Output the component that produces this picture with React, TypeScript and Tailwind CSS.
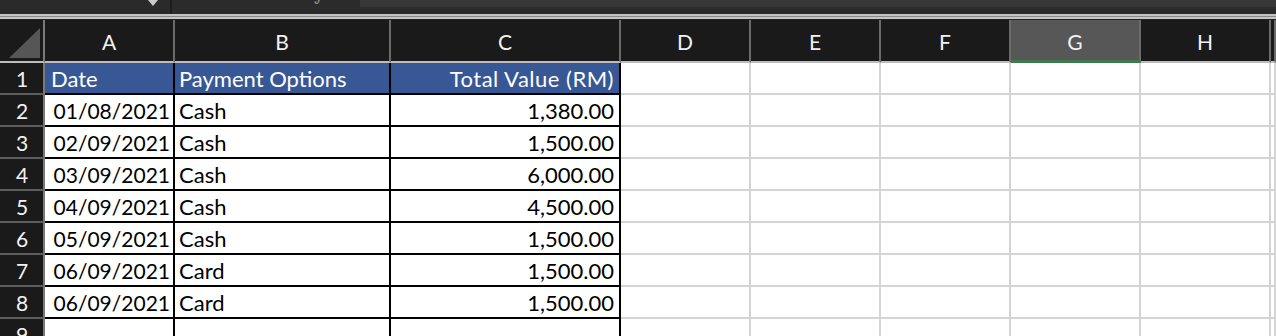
import React from "react";

const COLS = ["A", "B", "C", "D", "E", "F", "G", "H", ""];

const ROWS: [string, string, string][] = [
  ["01/08/2021", "Cash", "1,380.00"],
  ["02/09/2021", "Cash", "1,500.00"],
  ["03/09/2021", "Cash", "6,000.00"],
  ["04/09/2021", "Cash", "4,500.00"],
  ["05/09/2021", "Cash", "1,500.00"],
  ["06/09/2021", "Card", "1,500.00"],
  ["06/09/2021", "Card", "1,500.00"],
  ["", "", ""],
];

function Toolbar() {
  return (
    <div className="flex h-[20px] flex-col overflow-hidden">
      <div className="flex h-[14px]">
        {/* Name box */}
        <div className="flex w-[170px] justify-end bg-[#2a2a2a] pr-[12px]">
          <svg width="10" height="6" viewBox="0 0 10 6" className="block">
            <polygon points="0,0 10,0 5,6" fill="#cbcbcb" />
          </svg>
        </div>
        <div className="w-[2px] bg-[#1d1d1d]" />
        {/* fx */}
        <div className="flex w-[188px] bg-[#2b2b2b] pl-[144px]">
          <span className="mt-[-15px] font-serif text-[19px] italic leading-none text-[#8d8d8d]">
            ƒ
          </span>
        </div>
        {/* formula input */}
        <div className="flex flex-1 flex-col">
          <div className="h-[7px] bg-[#383838]" />
          <div className="h-[7px] bg-[#2b2b2b]" />
        </div>
      </div>
      <div className="h-[2px] bg-[#c4c4c4]" />
      <div className="h-[1px] bg-[#8a8a8a]" />
      <div className="h-[2px] bg-[#c4c4c4]" />
      <div className="h-[1px] bg-[#232323]" />
    </div>
  );
}

export default function App() {
  return (
    <div className="h-[336px] w-[1276px] overflow-hidden bg-white font-[Lato,sans-serif]">
      <Toolbar />
      <div className="grid grid-cols-[45px_130px_216px_230px_130px_130px_130px_130px_130px_1fr] grid-rows-[43px_repeat(9,32px)]">
        {/* Header row */}
        <div className="box-border flex items-end justify-end border-r-2 border-b-2 border-r-[#7a7a7a] border-b-[#bdbdbd] bg-[#1a1a1a] pr-[3px] pb-[3px]">
          <svg width="31" height="30" viewBox="0 0 31 30" className="block">
            <polygon points="0,30 31,30 31,0" fill="#565656" />
          </svg>
        </div>
        {COLS.map((c) =>
          c === "G" ? (
            <div
              key={c}
              className="box-border flex items-end justify-center border-r-2 border-b-[3px] border-r-[#6b6b6b] border-b-[#3e7a4b] bg-[#575757] pb-[6px] text-[21px] leading-[24px] text-[#f2f2f2]"
            >
              {c}
            </div>
          ) : (
            <div
              key={c || "I"}
              className="box-border flex items-end justify-center border-r-2 border-b-2 border-r-[#6b6b6b] border-b-[#bdbdbd] bg-[#1a1a1a] pb-[7px] text-[21px] leading-[24px] text-[#f2f2f2]"
            >
              {c}
            </div>
          )
        )}

        {/* Row 1: table header */}
        <div className="box-border flex items-end justify-center border-r-2 border-b-2 border-r-[#7a7a7a] border-b-[#5e5e5e] bg-[#1a1a1a] pb-[2px] pl-[1px] text-[21px] leading-[24px] text-[#f2f2f2]">
          1
        </div>
        <div className="box-border flex items-end border-r-2 border-b-2 border-black bg-[#385795] pb-[2px] pl-[6px] text-[22px] leading-[24px] text-white">
          Date
        </div>
        <div className="box-border flex items-end border-r-2 border-b-2 border-black bg-[#385795] pb-[2px] pl-[4px] text-[22px] leading-[24px] text-white">
          Payment Options
        </div>
        <div className="box-border flex items-end justify-end border-r-2 border-b-2 border-black bg-[#385795] pb-[2px] pr-[5px] text-[22px] leading-[24px] tracking-[0.5px] text-white">
          Total Value (RM)
        </div>
        {COLS.slice(3).map((c) => (
          <div
            key={c || "I"}
            className="box-border border-r-2 border-b-2 border-[#d4d4d4]"
          />
        ))}

        {/* Data rows */}
        {ROWS.map((r, i) => (
          <React.Fragment key={i}>
            <div className="box-border flex items-end justify-center border-r-2 border-b-2 border-r-[#7a7a7a] border-b-[#5e5e5e] bg-[#1a1a1a] pb-[2px] pl-[1px] text-[21px] leading-[24px] text-[#f2f2f2]">
              {i + 2}
            </div>
            <div className="box-border flex items-end justify-end border-r-2 border-b-2 border-black pb-[2px] pr-[3px] text-[21px] leading-[24px] text-black">
              {r[0]}
            </div>
            <div className="box-border flex items-end border-r-2 border-b-2 border-black pb-[2px] pl-[4px] text-[22px] leading-[24px] text-black">
              {r[1]}
            </div>
            <div className="box-border flex items-end justify-end border-r-2 border-b-2 border-black pb-[2px] pr-[5px] text-[22px] leading-[24px] text-black">
              {r[2]}
            </div>
            {COLS.slice(3).map((c) => (
              <div
                key={c || "I"}
                className="box-border border-r-2 border-b-2 border-[#d4d4d4]"
              />
            ))}
          </React.Fragment>
        ))}
      </div>
    </div>
  );
}
